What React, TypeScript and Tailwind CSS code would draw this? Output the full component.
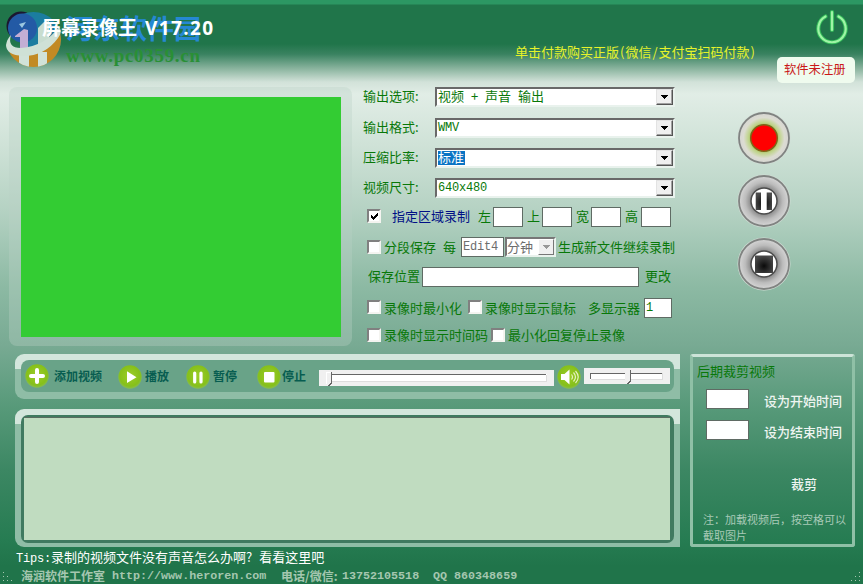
import type { ReactNode } from "react"

function Check({ checked = false, className = "" }: { checked?: boolean; className?: string }) {
  return (
    <span
      className={`flex h-[14px] w-[14px] shrink-0 items-center justify-center border-2 border-r-[#f4f4f0] border-b-[#f4f4f0] border-t-[#808080] border-l-[#808080] bg-white ${className}`}
    >
      {checked && (
        <svg viewBox="0 0 9 9" className="h-[9px] w-[9px]" shapeRendering="crispEdges">
          <path d="M1 3v3l2 2 5-5V0L3 5z" fill="#000" />
        </svg>
      )}
    </span>
  )
}

function Field({ className, children }: { className: string; children?: ReactNode }) {
  return (
    <span className={`flex h-5 shrink-0 items-center border border-[#5f6b64] bg-white pl-px ${className}`}>
      {children}
    </span>
  )
}

function Combo({ children }: { children: ReactNode }) {
  return (
    <div className="flex h-5 w-[240px] border-2 border-t-[#696969] border-l-[#696969] border-r-[#e9f2ed] border-b-[#e9f2ed] bg-white">
      <div className="flex h-4 flex-1 items-center pb-px pl-px">{children}</div>
      <div className="flex h-4 w-[17px] items-center justify-center border border-t-[#e3e3e3] border-l-[#e3e3e3] border-r-[#555] border-b-[#555] bg-[#f0f0f0] shadow-[inset_-1px_-1px_0_#a0a0a0]">
        <svg viewBox="0 0 7 4" className="h-1 w-[7px]" shapeRendering="crispEdges">
          <path d="M0 0h7L3.5 4z" fill="#000" />
        </svg>
      </div>
    </div>
  )
}

function ComboRow({ label, className, children }: { label: string; className: string; children: ReactNode }) {
  return (
    <div className={`flex h-5 items-center ${className}`}>
      <span className="w-[72px] pb-[2px]">{label}</span>
      <Combo>{children}</Combo>
    </div>
  )
}

function Panel({ className, children }: { className: string; children: ReactNode }) {
  return (
    <div
      className={`flex w-[665px] rounded-l-[9px] bg-[linear-gradient(to_bottom,#d3e6dc_15px,#8fbda6_15px)] ${className}`}
    >
      {children}
    </div>
  )
}

function GreenIcon({ className, children }: { className: string; children: ReactNode }) {
  return (
    <svg viewBox="0 0 24 24" className={`h-6 w-6 shrink-0 ${className}`}>
      <defs>
        <radialGradient id="lime" cx="50%" cy="45%" r="55%">
          <stop offset="0" stopColor="#9dcd28" />
          <stop offset="0.8" stopColor="#86c01a" />
          <stop offset="1" stopColor="#86bd52" />
        </radialGradient>
      </defs>
      <circle cx="12" cy="12" r="11.7" fill="url(#lime)" />
      {children}
    </svg>
  )
}

function RoundButton({ kind }: { kind: "record" | "pause" | "stop" }) {
  return (
    <svg viewBox="0 0 54 54" className="h-[54px] w-[54px]">
      <defs>
        <radialGradient id="recordRing">
          <stop offset="0.5" stopColor="#a3b860" />
          <stop offset="0.62" stopColor="#bfd48a" />
          <stop offset="0.82" stopColor="#dcdcd2" />
          <stop offset="1" stopColor="#d6d6d2" />
        </radialGradient>
        <radialGradient id="greyRing">
          <stop offset="0.5" stopColor="#858585" />
          <stop offset="0.75" stopColor="#bcbcbc" />
          <stop offset="1" stopColor="#d6d6d6" />
        </radialGradient>
        <radialGradient id="glyph" cx="50%" cy="60%" r="60%">
          <stop offset="0" stopColor="#0a0a0a" />
          <stop offset="1" stopColor="#4a4a4a" />
        </radialGradient>
      </defs>
      <circle cx="27" cy="27" r="26.5" fill="#d2ddd6" />
      <circle
        cx="27"
        cy="27"
        r="25"
        fill={kind === "record" ? "url(#recordRing)" : "url(#greyRing)"}
        stroke="#808381"
        strokeWidth="1.8"
      />
      {kind === "record" ? (
        <circle cx="27" cy="27" r="13.3" fill="#ff0000" stroke="#7c6818" strokeWidth="1.5" />
      ) : (
        <circle cx="27" cy="27" r="13" fill="#fff" stroke="#4c4c4c" strokeWidth="1.5" />
      )}
      {kind === "pause" && <path d="M18.7 18.5h5.300v17.500h-5.300zM29.700 18.500h5.300v17.500h-5.300z" fill="url(#glyph)" />}
      {kind === "stop" && <rect x="18" y="18.5" width="18" height="17.5" fill="url(#glyph)" />}
    </svg>
  )
}

function SiteMark() {
  return (
    <div className="pointer-events-none absolute top-[10px] left-[5px] flex">
      <svg viewBox="0 0 58 60" className="h-[60px] w-[58px]">
        <defs>
          <clipPath id="disc">
            <circle cx="28.5" cy="29.5" r="27.5" />
          </clipPath>
        </defs>
        <circle cx="16" cy="16" r="14.5" fill="#1b1730" />
        <g clipPath="url(#disc)">
          <path d="M16 0h42v42H16z" fill="#1b7da0" />
          <path d="M0 42Q34 46 58 20V60H0z" fill="#c28a24" />
          <path d="M14 44h10v16H14zM33 42h9v18h-9z" fill="#d1e2d8" />
        </g>
        <circle cx="17.5" cy="18" r="14.5" fill="#235aa5" />
        <path d="M14 14l7-2-4 6z" fill="#9cc7e0" />
        <path d="M10 26l9-7 4 1v20H15V27h-5z" fill="#c3aed4" />
        <path d="M33 18l6-6 5-1v25l-11 5z" fill="#c8ddd0" />
        <path d="M6 25Q2 38 16 38Q40 36 54 17Q58 21 53 28Q40 46 18 46Q1 45 1 35Q2 29 6 25z" fill="#cfe1d6" />
      </svg>
      <div className="mt-[2px] ml-[3px] flex flex-col">
        <span className="text-[27px] leading-[32px] font-bold text-[#2588d3]">河东软件园</span>
        <span className="mt-px font-['Liberation_Serif',serif] text-[19px] leading-[22px] font-bold tracking-[0.7px] text-[#298f35]">
          www.pc0359.cn
        </span>
      </div>
    </div>
  )
}

const mono = "font-['Liberation_Mono',monospace] text-[12px] tracking-[-0.2px]"

export default function App() {
  return (
    <div className="relative flex h-[584px] w-[863px] flex-col overflow-hidden bg-[linear-gradient(to_bottom,#2c9763_0,#2c9763_4px,#20754a_5px,#20754a_44px,#398260_54px,#8cb5a0_69px,#d2e2d9_82px,#e1ede6_94px,#cfe2d7_145px,#b5d2c3_210px,#8dbaa4_285px,#78aa93_345px,#589a7a_405px,#3c8763_470px,#267c52_540px,#20744a_566px,#20744a_584px)] font-['Noto_Sans_CJK_SC',sans-serif] text-[13px] leading-[16px] whitespace-nowrap text-[#087808]">
      <SiteMark />

      <header className="relative flex h-[87px] shrink-0">
        <h1 className="w-[515px] pt-[13px] pl-[42px] text-[19px] leading-[28px] font-bold text-white">
          屏幕录像王
          <span className="ml-[8px] font-['Open_Sans',sans-serif] tracking-[1.4px]">V17.20</span>
        </h1>
        <p className="mt-[44px] w-[262px] text-[#e6f32a]">
          单击付款购买正版<span className="mx-px">(</span>微信<span className="mx-px">/</span>支付宝扫码付款
          <span className="ml-px">)</span>
        </p>
        <div className="flex w-[78px] flex-col">
          <svg viewBox="0 0 34 36" className="mt-[9px] ml-[38px] h-9 w-[34px]" fill="none" strokeLinecap="round">
            <path d="M10.5 7.5a13.7 13.7 0 1 0 13 0M17 3v18" stroke="#35bd5b" strokeWidth="4.2" />
            <path d="M10.5 7.5a13.7 13.7 0 1 0 13 0M17 3v18" stroke="#9ef5a5" strokeWidth="2.2" />
          </svg>
          <span className="mt-[12px] flex h-[26px] items-center rounded-[5px] bg-[#effbee] pb-[2px] pl-[7px] text-[12.3px] text-[#c91818]">
            软件未注册
          </span>
        </div>
      </header>

      <main className="flex h-[267px] shrink-0 pl-[9px]">
        <div className="h-[259px] w-[343px] rounded-[8px] bg-[#bad2c6]/35 px-3 pt-[10px]">
          <div className="h-[240px] w-[320px] bg-[#33cc33]" />
        </div>

        <form className="ml-[11px] w-[375px]">
          <ComboRow label="输出选项:" className="mb-[11px]">
            <span className="pb-[2px]">
              视频 <span className="mx-[4px]">+</span> 声音 <span className="ml-[4px]">输出</span>
            </span>
          </ComboRow>
          <ComboRow label="输出格式:" className="mb-[10px]">
            <span className={mono}>WMV</span>
          </ComboRow>
          <ComboRow label="压缩比率:" className="mb-[10px]">
            <span className="flex h-[14px] w-[27px] items-center bg-[#0a74c4] pb-px leading-[14px] text-white">标准</span>
          </ComboRow>
          <ComboRow label="视频尺寸:" className="mb-[9px]">
            <span className={mono}>640x480</span>
          </ComboRow>

          <div className="mb-[10px] flex h-5 items-center pl-1">
            <Check checked className="mb-[2px]" />
            <span className="ml-[11px] w-[86px] pb-[2px] text-[#000f86]">指定区域录制</span>
            <span className="w-[15px] pb-[2px]">左</span>
            <Field className="mr-1 w-[30px]" />
            <span className="w-[15px] pb-[2px]">上</span>
            <Field className="mr-1 w-[30px]" />
            <span className="w-[15px] pb-[2px]">宽</span>
            <Field className="mr-1 w-[30px]" />
            <span className="w-4 pb-[2px]">高</span>
            <Field className="w-[30px]" />
          </div>

          <div className="mb-[10px] flex h-5 items-center pl-1">
            <Check />
            <span className="ml-[3px] w-[59px]">分段保存</span>
            <span className="w-[18px]">每</span>
            <Field className="w-[43px] text-[#6d6d6d]">
              <span className={mono}>Edit4</span>
            </Field>
            <span className="ml-px flex h-5 w-[51px] items-center border-2 border-t-[#777] border-l-[#777] border-r-[#e9f2ed] border-b-[#e9f2ed] bg-white text-[#6d6d6d]">
              <span className="w-[31px] pb-px">分钟</span>
              <span className="flex h-4 w-4 items-center justify-center border border-white border-r-[#777] border-b-[#777] bg-[#f0f0f0]">
                <svg viewBox="0 0 7 4" className="h-1 w-[7px]" shapeRendering="crispEdges">
                  <path d="M0 0h7L3.5 4z" fill="#999" />
                </svg>
              </span>
            </span>
            <span className="ml-[2px]">生成新文件继续录制</span>
          </div>

          <div className="mb-[11px] flex h-5 items-center pl-[5px]">
            <span className="w-[54px] pb-[2px]">保存位置</span>
            <Field className="mr-[6px] w-[217px]" />
            <span className="pb-[2px]">更改</span>
          </div>

          <div className="mb-[7px] flex h-5 items-center pl-1">
            <Check className="mb-[2px]" />
            <span className="ml-[3px] w-[84px]">录像时最小化</span>
            <Check className="mb-[2px]" />
            <span className="ml-[3px] w-[103px]">录像时显示鼠标</span>
            <span className="w-14">多显示器</span>
            <Field className="w-7">
              <span className={mono}>1</span>
            </Field>
          </div>

          <div className="flex h-5 items-center pl-1">
            <Check />
            <span className="ml-[3px] w-[107px]">录像时显示时间码</span>
            <Check />
            <span className="ml-[3px]">最小化回复停止录像</span>
          </div>
        </form>

        <div className="-ml-px mt-6 flex flex-col gap-[9px]">
          <RoundButton kind="record" />
          <RoundButton kind="pause" />
          <RoundButton kind="stop" />
        </div>
      </main>

      <section className="flex h-[193px] shrink-0 pl-[15px]">
        <div className="flex flex-col gap-[10px]">
          <Panel className="h-[45px] px-[6px] pt-[6px]">
            <div className="flex h-8 w-[654px] items-center rounded-[8px] bg-[#69a388] pl-1 text-[12px] font-bold text-[#075d50]">
              <GreenIcon className="">
                <path d="M12 6v12M6 12h12" stroke="#fff" strokeWidth="4" strokeLinecap="round" />
              </GreenIcon>
              <span className="ml-[5px] w-16">添加视频</span>
              <GreenIcon className="mt-[2px]">
                <path d="M9 6.2l9.500 6L9 18z" fill="#fff" />
              </GreenIcon>
              <span className="ml-[3px] w-[41px]">播放</span>
              <GreenIcon className="mt-[2px]">
                <path d="M8.7 8v9M15 8v9" stroke="#fff" strokeWidth="3.2" strokeLinecap="round" />
              </GreenIcon>
              <span className="ml-[3px] w-11">暂停</span>
              <GreenIcon className="mt-[2px]">
                <rect x="7" y="7" width="10.5" height="10.5" rx="1" fill="#fff" />
              </GreenIcon>
              <span className="ml-px w-[37px]">停止</span>
              <svg viewBox="0 0 235 16" className="mt-[3px] h-4 w-[235px] shrink-0" shapeRendering="crispEdges">
                <rect width="235" height="16" fill="#f0f0f0" />
                <rect x="12" y="4" width="216" height="8" fill="#fff" />
                <path d="M12 11V4.5h215" fill="none" stroke="#666" />
                <path d="M13 11.5h214V5" fill="none" stroke="#ddd" />
                <path d="M7 2h5v12L9.5 16 7 14z" fill="#f0f0f0" />
                <path d="M7.5 14V2.5h4" fill="none" stroke="#fff" />
                <path d="M12.5 2v11l-3 3" fill="none" stroke="#666" />
              </svg>
              <GreenIcon className="mt-[2px] ml-[3px]">
                <path d="M4 9h3.5l5-4.5v15L7.5 15H4z" fill="#fff" />
                <path
                  d="M14.5 9.5q2 2.5 0 5M16.5 7.5q4 4.5 0 9M18.5 6q5.5 6 0 12"
                  fill="none"
                  stroke="#e5f2bf"
                  strokeWidth="1.2"
                />
              </GreenIcon>
              <svg viewBox="0 0 86 16" className="mt-[-1px] ml-[3px] h-4 w-[86px] shrink-0" shapeRendering="crispEdges">
                <rect width="86" height="16" fill="#f0f0f0" />
                <rect x="6" y="5" width="73" height="7" fill="#fff" />
                <path d="M6.5 11V5.5h72" fill="none" stroke="#666" />
                <path d="M7 11.5h71.5V5" fill="none" stroke="#ddd" />
                <path d="M41 2h5v12l-2.5 2-2.5-2z" fill="#f0f0f0" />
                <path d="M46.5 2v11l-3 3" fill="none" stroke="#666" />
              </svg>
            </div>
          </Panel>
          <Panel className="h-[138px] px-[6px] pt-[6px]">
            <div className="h-[128px] w-[654px] rounded-[7px] bg-[#407a60] px-[3px] pt-[2px]">
              <div className="h-[123px] w-[646px] border-t border-[#596d60] bg-[#c0dcc0]" />
            </div>
          </Panel>
        </div>

        <aside className="ml-[10px] w-[165px] rounded-[3px] border-[3px] border-[#8fc0a6] border-t-[#cde4d8] pt-[6px]">
          <h2 className="pl-1">后期裁剪视频</h2>
          <div className="mt-[10px] flex h-5 items-center pl-[13px] font-medium text-[#eef5f1]">
            <Field className="mr-[15px] w-[43px]" />
            <span className="mt-[3px]">设为开始时间</span>
          </div>
          <div className="mt-[11px] flex h-5 items-center pl-[13px] font-medium text-[#eef5f1]">
            <Field className="mr-[15px] w-[43px]" />
            <span className="mt-[3px]">设为结束时间</span>
          </div>
          <p className="mt-9 pl-[98px] font-medium text-[#eef5f1]">裁剪</p>
          <p className="mt-[19px] pl-[10px] text-[11px] leading-[16px] text-[#a8cab7]">
            注：加载视频后，按空格可以
            <br />
            截取图片
          </p>
        </aside>
      </section>

      <footer className="flex flex-1 flex-col">
        <p className="mt-[2px] pl-4 text-white">
          <span className={mono}>Tips:</span>录制的视频文件没有声音怎么办啊<span className="mr-[7px]">?</span>看看这里吧
        </p>
        <div className="flex h-[18px] items-center text-[12px] leading-[18px] font-bold text-[#a5c7b0]">
          <svg viewBox="0 0 12 12" className="mt-[2px] mr-[8px] ml-px h-3 w-3" shapeRendering="crispEdges">
            <path d="M2 1h1v1H2zM2 5h1v1H2zM6 5h1v1H6zM2 9h1v1H2zM6 9h1v1H6zM10 9h1v1h-1z" fill="#a5c7b0" />
          </svg>
          <span className="w-[91px]">海润软件工作室</span>
          <span className="w-[169px] font-['Liberation_Mono',monospace] text-[11.7px]">http://www.heroren.com</span>
          <span className="w-[61px]">电话/微信:</span>
          <span className="w-[91px] font-['Liberation_Mono',monospace] text-[11.7px]">13752105518</span>
          <span className="font-['Liberation_Mono',monospace] text-[11.7px]">QQ 860348659</span>
          <svg viewBox="0 0 12 12" className="mt-[2px] mr-px ml-auto h-3 w-3" shapeRendering="crispEdges">
            <path d="M9 1h1v1H9zM9 5h1v1H9zM5 5h1v1H5zM9 9h1v1H9zM5 9h1v1H5zM1 9h1v1H1z" fill="#a5c7b0" />
          </svg>
        </div>
      </footer>
    </div>
  )
}
